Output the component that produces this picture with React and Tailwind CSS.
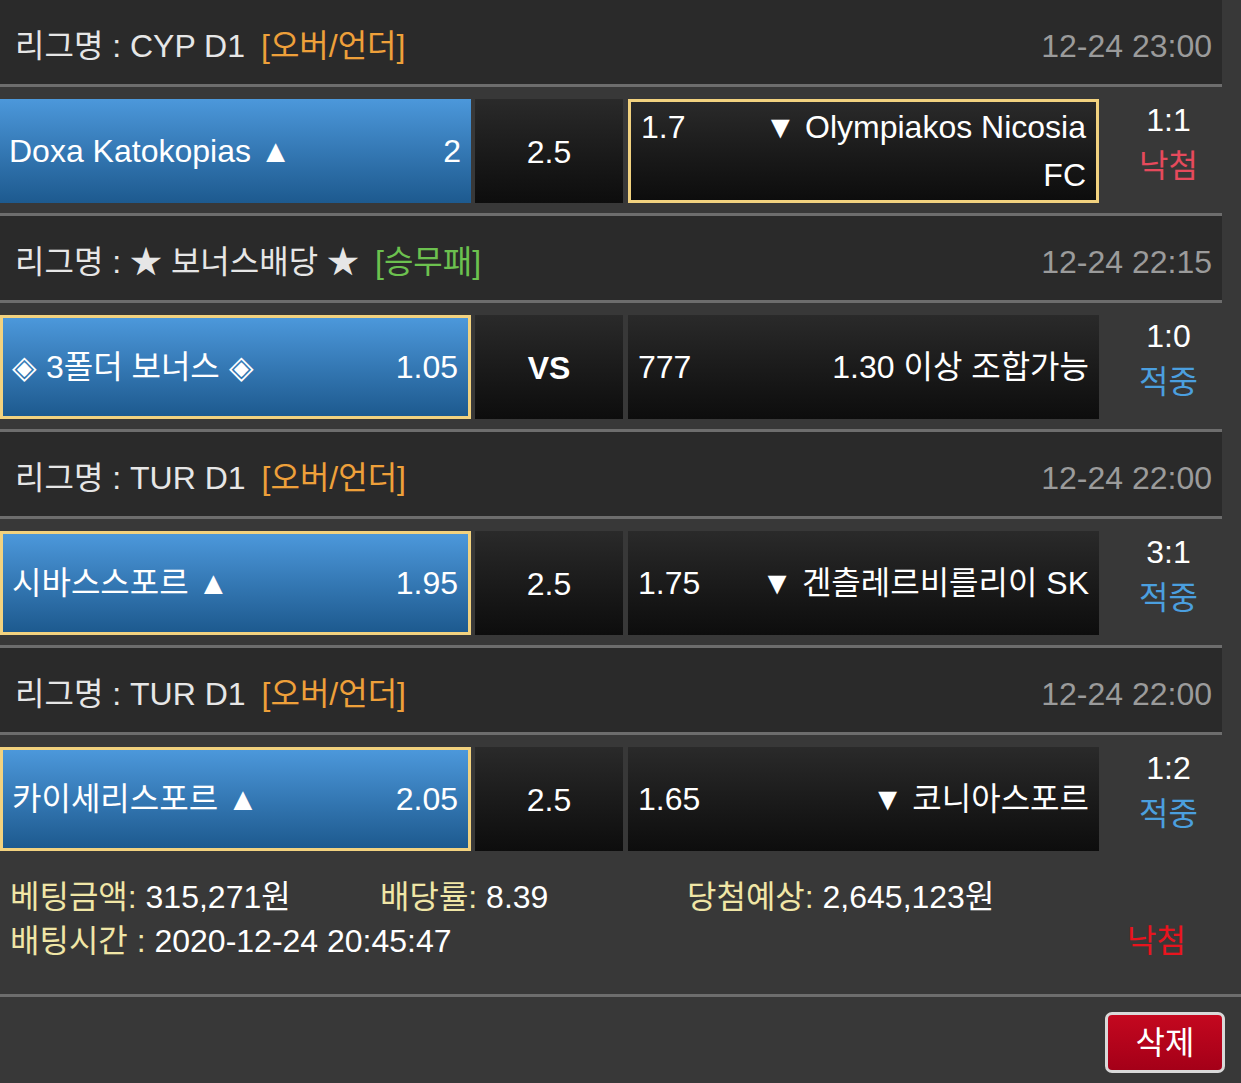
const games = [
  {
    league: "CYP D1",
    type: "[오버/언더]",
    typeColor: "text-[#eea03a]",
    date: "12-24 23:00",
    home: "Doxa Katokopias ▲",
    homeOdds: "2",
    mid: "2.5",
    awayOdds: "1.7",
    away: "▼ Olympiakos Nicosia FC",
    score: "1:1",
    result: "낙첨",
    pick: "away",
  },
  {
    league: "★ 보너스배당 ★",
    type: "[승무패]",
    typeColor: "text-[#6cc14f]",
    date: "12-24 22:15",
    home: "◈ 3폴더 보너스 ◈",
    homeOdds: "1.05",
    mid: "VS",
    awayOdds: "777",
    away: "1.30 이상 조합가능",
    score: "1:0",
    result: "적중",
    pick: "home",
  },
  {
    league: "TUR D1",
    type: "[오버/언더]",
    typeColor: "text-[#eea03a]",
    date: "12-24 22:00",
    home: "시바스스포르 ▲",
    homeOdds: "1.95",
    mid: "2.5",
    awayOdds: "1.75",
    away: "▼ 겐츨레르비를리이 SK",
    score: "3:1",
    result: "적중",
    pick: "home",
  },
  {
    league: "TUR D1",
    type: "[오버/언더]",
    typeColor: "text-[#eea03a]",
    date: "12-24 22:00",
    home: "카이세리스포르 ▲",
    homeOdds: "2.05",
    mid: "2.5",
    awayOdds: "1.65",
    away: "▼ 코니아스포르",
    score: "1:2",
    result: "적중",
    pick: "home",
  },
];

const LeagueHeader = ({ game }) => (
  <div className="h-[87px] flex items-center justify-between pt-[8px] pl-[15px] pr-[10px] bg-[#2a2a2a] border-b-[3px] border-[#6d6d6d]">
    <div className="text-[#e6e6e6]">
      리그명 : {game.league}
      <span className={`ml-[16px] ${game.typeColor}`}>{game.type}</span>
    </div>
    <div className="text-[#9b9b9b]">{game.date}</div>
  </div>
);

const GameRow = ({ game, last }) => {
  const homePicked = game.pick === "home";
  const awayPicked = game.pick === "away";

  return (
    <div
      className={`flex items-start gap-[4px] pt-[12px] ${
        last ? "h-[126px]" : "h-[129px] border-b-[3px] border-[#6d6d6d]"
      }`}
    >
      {/* Home */}
      <div
        className={`w-[471px] h-[104px] flex items-center justify-between pl-[9px] pr-[10px] text-white bg-linear-to-b from-[#4c98db] to-[#1d5a8f] ${
          homePicked ? "border-[3px] border-[#f2d27f]" : ""
        }`}
      >
        <span>{game.home}</span>
        <span>{game.homeOdds}</span>
      </div>

      {/* Handicap / VS */}
      <div
        className={`w-[148px] h-[104px] flex items-center justify-center pt-[2px] text-white bg-linear-to-b from-[#2a2a2a] to-[#0d0d0d] ${
          game.mid === "VS" ? "font-bold" : ""
        }`}
      >
        {game.mid}
      </div>

      {/* Away */}
      <div
        className={`ml-[1px] w-[471px] h-[104px] flex items-center px-[10px] text-white leading-[48px] bg-linear-to-b from-[#2a2a2a] to-[#0d0d0d] ${
          awayPicked ? "border-[3px] border-[#f2d27f]" : ""
        }`}
      >
        <div className="flex w-full items-baseline justify-between">
          <span>{game.awayOdds}</span>
          <span className="max-w-[75%] text-right">{game.away}</span>
        </div>
      </div>

      {/* Score */}
      <div className="flex-1 h-[104px] -mt-[2px] pl-[12px] flex flex-col items-center leading-[46px]">
        <span className="text-white">{game.score}</span>
        <span className={game.result === "낙첨" ? "text-[#e64a5c]" : "text-[#4b9fdf]"}>
          {game.result}
        </span>
      </div>
    </div>
  );
};

export default function App() {
  return (
    <div className="w-[1241px] h-[1083px] overflow-hidden bg-[#383838] text-[32px] leading-[44px] font-[family-name:'Liberation_Sans','Noto_Sans_CJK_KR',sans-serif]">
      <div className="w-[1222px]">
        {games.map((game, i) => (
          <div key={i}>
            <LeagueHeader game={game} />
            <GameRow game={game} last={i === games.length - 1} />
          </div>
        ))}
      </div>

      {/* Summary */}
      <div className="pt-[14px] pb-[31px] pl-[10px] border-b-[3px] border-[#6d6d6d]">
        <div className="flex">
          <div className="w-[370px]">
            <span className="text-[#f0e6a6]">베팅금액:</span>
            <span className="text-white"> 315,271원</span>
          </div>
          <div className="w-[307px]">
            <span className="text-[#f0e6a6]">배당률:</span>
            <span className="text-white"> 8.39</span>
          </div>
          <div>
            <span className="text-[#f0e6a6]">당첨예상:</span>
            <span className="text-white"> 2,645,123원</span>
          </div>
        </div>
        <div className="flex justify-between pr-[55px]">
          <div>
            <span className="text-[#f0e6a6]">배팅시간 : </span>
            <span className="text-white">2020-12-24 20:45:47</span>
          </div>
          <span className="text-[#e8141e]">낙첨</span>
        </div>
      </div>

      {/* Actions */}
      <div className="flex justify-end pt-[15px] pr-[16px]">
        <button className="w-[120px] h-[61px] rounded-[7px] border-[3px] border-[#d9d9d9] bg-linear-to-b from-[#c4081f] to-[#a40018] text-white flex items-center justify-center">
          삭제
        </button>
      </div>
    </div>
  );
}
